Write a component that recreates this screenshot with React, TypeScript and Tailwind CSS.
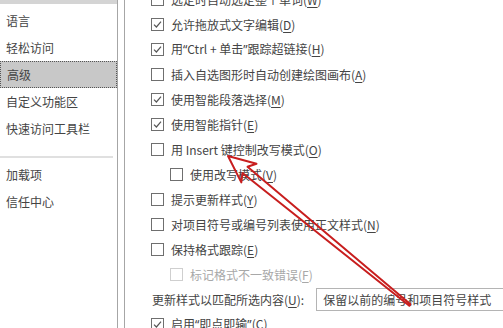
import React from "react";

const font = { fontFamily: '"Noto Sans CJK SC", "Noto Sans", sans-serif' };
const latin = { fontFamily: '"Noto Sans", "Noto Sans CJK SC", sans-serif' };

function Check({ checked, disabled }: { checked?: boolean; disabled?: boolean }) {
  return (
    <span
      className={`flex h-[13px] w-[13px] shrink-0 items-center justify-center border bg-white ${
        disabled ? "border-[#cfcfcf]" : "border-[#6f6f6f]"
      }`}
    >
      {checked && (
        <svg width="11" height="11" viewBox="0 0 11 11">
          <path d="M2 5.6 L4.4 8 L9 2.6" fill="none" stroke="#555" strokeWidth="1.2" />
        </svg>
      )}
    </span>
  );
}

type Row = { pre: React.ReactNode; key: string; post?: string; checked?: boolean; indent?: boolean; disabled?: boolean };

const Q = ({ c }: { c: string }) => <span style={latin}>{c}</span>;

const rows: Row[] = [
  { pre: "选定时自动选定整个单词(", key: "W", post: ")", checked: false },
  { pre: "允许拖放式文字编辑(", key: "D", post: ")", checked: true },
  {
    pre: (
      <>
        用<Q c="“" />Ctrl + 单击<Q c="”" />跟踪超链接(
      </>
    ),
    key: "H",
    post: ")",
    checked: true,
  },
  { pre: "插入自选图形时自动创建绘图画布(", key: "A", post: ")", checked: false },
  { pre: "使用智能段落选择(", key: "M", post: ")", checked: true },
  { pre: "使用智能指针(", key: "E", post: ")", checked: true },
  { pre: "用 Insert 键控制改写模式(", key: "O", post: ")", checked: false },
  { pre: "使用改写模式(", key: "V", post: ")", checked: false, indent: true },
  { pre: "提示更新样式(", key: "Y", post: ")", checked: false },
  { pre: "对项目符号或编号列表使用正文样式(", key: "N", post: ")", checked: false },
  { pre: "保持格式跟踪(", key: "E", post: ")", checked: false },
  { pre: "标记格式不一致错误(", key: "F", post: ")", checked: false, indent: true, disabled: true },
];

const nav = ["语言", "轻松访问", "高级", "自定义功能区", "快速访问工具栏"];

export default function App() {
  return (
    <div className="relative h-[328px] w-[503px] overflow-hidden bg-white text-[12px] text-[#444]" style={font}>
      <div className="flex h-full">
        {/* left nav */}
        <div className="flex w-[117px] shrink-0 flex-col">
          <div className="h-[4px] w-full bg-[#d4d4d4]" />
          <div className="h-[3px]" />
          {nav.map((n) => (
            <div
              key={n}
              className={`flex h-[27px] items-center px-[6px] ${
                n === "高级" ? "border border-dotted border-[#555] bg-[#c8c8c8] px-[5px]" : ""
              }`}
            >
              {n}
            </div>
          ))}
          <div className="mt-[1px] h-[13px]" />
          <div className="mr-[4px] h-[2px] bg-[#e0e0e0]" />
          <div className="h-[3px]" />
          <div className="flex h-[27px] items-center px-[6px]">加载项</div>
          <div className="flex h-[27px] items-center px-[6px]">信任中心</div>
        </div>
        <div className="w-px shrink-0 bg-[#a6a6a6]" />
        <div className="w-[6px] shrink-0" />
        <div className="w-px shrink-0 bg-[#a6a6a6]" />
        {/* content */}
        <div className="flex min-w-0 flex-1 flex-col pl-[26px] -mt-[13px]">
          {rows.map((r, i) => (
            <div
              key={i}
              className={`flex h-[25px] shrink-0 items-center gap-[6px] whitespace-nowrap ${
                r.indent ? "pl-[19px]" : ""
              } ${r.disabled ? "text-[#a8a8a8]" : ""}`}
            >
              <Check checked={r.checked} disabled={r.disabled} />
              <span className="pl-[1px]">
                {r.pre}
                <span className="underline underline-offset-2">{r.key}</span>
                {r.post}
              </span>
            </div>
          ))}
          <div className="flex h-[25px] shrink-0 items-center whitespace-nowrap">
            <span className="pl-px">
              更新样式以匹配所选内容(<span className="underline underline-offset-2">U</span>):
            </span>
            <div className="ml-[12px] flex h-[23px] w-[220px] shrink-0 items-center border border-[#b4b4b4] pl-[6px]">
              保留以前的编号和项目符号样式
            </div>
          </div>
          <div className="flex h-[25px] shrink-0 items-center gap-[6px] whitespace-nowrap">
            <Check checked />
            <span className="pl-[1px]">
              启用<Q c="“" />即点即输<Q c="”" />(<span className="underline underline-offset-2">C</span>)
            </span>
          </div>
        </div>
      </div>
      <svg className="pointer-events-none absolute inset-0" width="503" height="328" viewBox="0 0 503 328">
        <polygon
          points="228,156 241.3,182.4 242.5,173 409.3,305.8 410.5,304.2 247.5,166.8 256.5,163.8"
          fill="none"
          stroke="#c81e1e"
          strokeWidth="2"
          strokeLinejoin="round"
        />
      </svg>
    </div>
  );
}
